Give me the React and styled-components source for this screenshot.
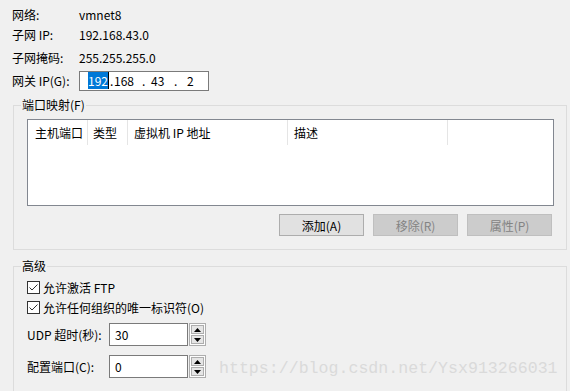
import { createGlobalStyle, styled } from 'styled-components';

const GlobalStyle = createGlobalStyle`
  html, body {
    margin: 0;
    padding: 0;
    background: #f0f0f0;
  }
  body {
    font-family: "Noto Sans CJK SC", "Noto Sans", sans-serif;
    font-size: 12px;
    color: #000;
  }
`;

const Dialog = styled.div`
  position: relative;
  width: 570px;
  height: 391px;
  overflow: hidden;
  padding-top: 5px;
  box-sizing: border-box;
  background: #f0f0f0;
`;

const InfoGrid = styled.div`
  display: grid;
  grid-template-columns: 67px max-content;
  grid-template-rows: 20px 20px 25px 22px;
  align-items: center;
  padding-left: 12px;
  line-height: 16px;
`;

const IpBox = styled.div`
  position: relative;
  width: 130px;
  height: 20px;
  box-sizing: border-box;
  border: 1px solid #7a7a7a;
  background: #fff;
  display: flex;
  align-items: center;
  line-height: 16px;
`;

const IpSlot = styled.span`
  width: ${(p) => p.$w}px;
  flex: none;
  white-space: pre;
`;

const Selected = styled.span`
  background: #0078d7;
  color: #fff;
  border-right: 1px solid #000;
`;

const Group = styled.fieldset`
  margin: ${(p) => p.$top}px 3px 0 13px;
  padding: 0 12px ${(p) => p.$bottom}px 13px;
  border: 1px solid #dcdcdc;
  min-width: 0;
`;

const Legend = styled.legend`
  padding: 0 1px;
  margin-left: -6px;
  line-height: 16px;
`;

const ListView = styled.div`
  margin-top: 6px;
  height: 87px;
  box-sizing: border-box;
  border: 1px solid #828790;
  background: #fff;
`;

const Header = styled.div`
  display: flex;
  height: 25px;
`;

const HeaderCell = styled.div`
  width: ${(p) => p.$w}px;
  flex: none;
  box-sizing: border-box;
  padding-left: ${(p) => p.$pad || 6}px;
  border-right: 1px solid #e5e5e5;
  display: flex;
  align-items: center;
  white-space: nowrap;
`;

const ButtonRow = styled.div`
  display: flex;
  justify-content: flex-end;
  gap: 9px;
  margin-top: 8px;
  padding-right: 2px;
`;

const Button = styled.button`
  width: 85px;
  height: 22px;
  box-sizing: border-box;
  font-family: inherit;
  font-size: 12px;
  padding: 0;
  border: 1px solid ${(p) => (p.disabled ? '#bfbfbf' : '#adadad')};
  background: ${(p) => (p.disabled ? '#cccccc' : '#e1e1e1')};
  color: ${(p) => (p.disabled ? '#838383' : '#000')};
`;

const CheckRow = styled.label`
  display: flex;
  align-items: center;
  height: 20px;
  gap: 3px;
  margin-top: ${(p) => p.$top || 0}px;
`;

const SpinRow = styled.div`
  display: flex;
  align-items: center;
  height: 23px;
  margin-top: ${(p) => p.$top}px;
`;

const SpinLabel = styled.span`
  width: 82px;
  flex: none;
  white-space: nowrap;
`;

const SpinInput = styled.div`
  width: 79px;
  height: 23px;
  box-sizing: border-box;
  border: 1px solid #7a7a7a;
  background: #fff;
  padding-left: 5px;
  display: flex;
  align-items: center;
`;

const Spinner = styled.div`
  width: 17px;
  height: 23px;
  box-sizing: border-box;
  margin-left: 1px;
  border: 1px solid #adadad;
  background: #fdfdfd;
  display: flex;
  flex-direction: column;
  gap: 1px;
  padding: 1px;
`;

const SpinButton = styled.div`
  flex: 1;
  border: 1px solid #adadad;
  background: #e5e5e5;
  display: flex;
  align-items: center;
  justify-content: center;
`;

const Watermark = styled.div`
  position: absolute;
  left: 219px;
  top: 359px;
  font-family: "Liberation Mono", monospace;
  font-size: 16.6px;
  color: #dadada;
  white-space: nowrap;
`;

const Check = () => (
  <svg width="13" height="13" viewBox="0 0 13 13">
    <rect x="0.5" y="0.5" width="12" height="12" fill="#fff" stroke="#333" />
    <path d="M2.5 6.5 L5 9 L10.5 3.5" fill="none" stroke="#333" strokeWidth="1" />
  </svg>
);

const Arrow = ({ down }) => (
  <svg width="7" height="4" viewBox="0 0 7 4">
    <path d={down ? 'M0 0 H7 L3.5 4 Z' : 'M0 4 H7 L3.5 0 Z'} fill="#000" />
  </svg>
);

const NumberSpin = ({ label, value, top }) => (
  <SpinRow $top={top}>
    <SpinLabel>{label}</SpinLabel>
    <SpinInput>{value}</SpinInput>
    <Spinner>
      <SpinButton>
        <Arrow />
      </SpinButton>
      <SpinButton>
        <Arrow down />
      </SpinButton>
    </Spinner>
  </SpinRow>
);

const App = () => (
  <Dialog>
    <GlobalStyle />
    <InfoGrid>
      <span>网络:</span>
      <span>vmnet8</span>
      <span>子网 IP:</span>
      <span>192.168.43.0</span>
      <span>子网掩码:</span>
      <span>255.255.255.0</span>
      <span>网关 IP(G):</span>
      <IpBox>
        <IpSlot $w={8} />
        <IpSlot $w={22}>
          <Selected>192</Selected>
        </IpSlot>
        <IpSlot $w={4}>.</IpSlot>
        <IpSlot $w={28}>168</IpSlot>
        <IpSlot $w={9}>.</IpSlot>
        <IpSlot $w={23}>43</IpSlot>
        <IpSlot $w={13}>.</IpSlot>
        <IpSlot $w={10}>2</IpSlot>
      </IpBox>
    </InfoGrid>

    <Group $top={5} $bottom={13}>
      <Legend>端口映射(F)</Legend>
      <ListView>
        <Header>
          <HeaderCell $w={60} $pad={7}>主机端口</HeaderCell>
          <HeaderCell $w={40} $pad={5}>类型</HeaderCell>
          <HeaderCell $w={160}>虚拟机 IP 地址</HeaderCell>
          <HeaderCell $w={160}>描述</HeaderCell>
        </Header>
      </ListView>
      <ButtonRow>
        <Button>添加(A)</Button>
        <Button disabled>移除(R)</Button>
        <Button disabled>属性(P)</Button>
      </ButtonRow>
    </Group>

    <Group $top={8} $bottom={20}>
      <Legend>高级</Legend>
      <CheckRow $top={3}>
        <Check />
        允许激活 FTP
      </CheckRow>
      <CheckRow>
        <Check />
        允许任何组织的唯一标识符(O)
      </CheckRow>
      <NumberSpin label="UDP 超时(秒):" value="30" top={6} />
      <NumberSpin label="配置端口(C):" value="0" top={9} />
    </Group>

    <Watermark>https://blog.csdn.net/Ysx913266031</Watermark>
  </Dialog>
);

export default App;
